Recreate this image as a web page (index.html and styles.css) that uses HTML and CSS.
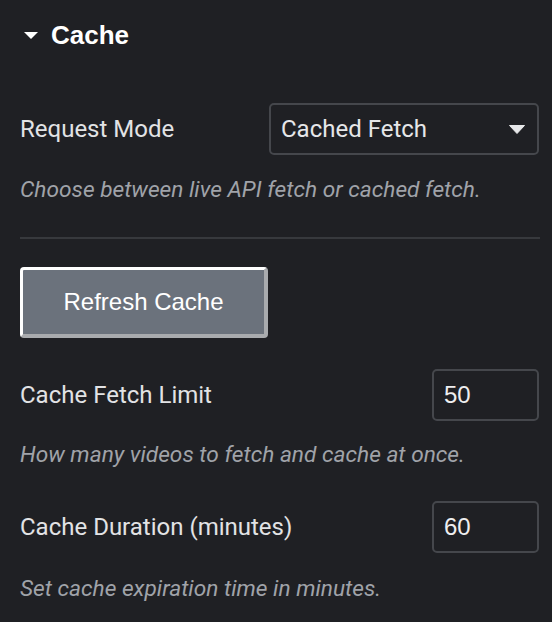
FILE: index.html
```html
<!DOCTYPE html>
<html lang="en">
<head>
<meta charset="utf-8">
<title>Cache</title>
<link rel="stylesheet" href="styles.css">
</head>
<body>
<div class="panel">
  <div class="section-title">
    <svg class="caret" width="14" height="7" viewBox="0 0 14 7"><path d="M0 0H14L7 7Z" fill="#ffffff"/></svg>
    <span>Cache</span>
  </div>

  <div class="row row-first">
    <span class="label">Request Mode</span>
    <div class="select">
      <span>Cached Fetch</span>
      <svg class="select-arrow" width="16" height="9" viewBox="0 0 16 9"><path d="M0.5 0.5H15.5L8 8.5Z" fill="#e6e7e9" stroke="#e6e7e9" stroke-linejoin="round"/></svg>
    </div>
  </div>
  <p class="help help-1">Choose between live API fetch or cached fetch.</p>

  <div class="divider"></div>

  <button class="refresh" type="button">Refresh Cache</button>

  <div class="row row-limit">
    <span class="label">Cache Fetch Limit</span>
    <input class="num" type="text" value="50">
  </div>
  <p class="help help-2">How many videos to fetch and cache at once.</p>

  <div class="row row-duration">
    <span class="label">Cache Duration (minutes)</span>
    <input class="num" type="text" value="60">
  </div>
  <p class="help help-3">Set cache expiration time in minutes.</p>
</div>
</body>
</html>
```

FILE: styles.css
```css
html, body {
  margin: 0;
  padding: 0;
  background: #1f2024;
}

.panel {
  padding: 20px 12px 0 20px;
  display: flex;
  flex-direction: column;
  font-family: Roboto, "Liberation Sans", sans-serif;
}

.section-title {
  display: flex;
  align-items: center;
  height: 30px;
  font-family: "Liberation Sans", Arial, sans-serif;
  font-weight: 700;
  font-size: 26px;
  line-height: 30px;
  color: #ffffff;
}

.caret {
  margin-left: 4px;
  margin-right: 13px;
  margin-top: 1px;
}

.row {
  display: flex;
  align-items: center;
  justify-content: space-between;
}

.row-first {
  margin-top: 53px;
}

.label {
  font-size: 24px;
  line-height: 30px;
  color: #e2e3e5;
}

.select {
  box-sizing: border-box;
  width: 270px;
  height: 52px;
  margin-right: 1px;
  border: 2px solid #45474c;
  border-radius: 5px;
  display: flex;
  align-items: center;
  justify-content: space-between;
  padding: 0 12px 0 10px;
  font-size: 24px;
  color: #e6e7e9;
}

.help {
  margin: 0;
  font-size: 22.7px;
  line-height: 30px;
  font-style: italic;
  color: #a0a3a9;
}

.help-1 { margin-top: 20px; }
.help-2 { margin-top: 19px; }
.help-3 { margin-top: 21px; }

.divider {
  height: 2px;
  background: #37393d;
  margin-top: 32px;
}

.refresh {
  box-sizing: border-box;
  width: 248px;
  height: 71px;
  margin-top: 28px;
  padding: 0;
  background: #6b727c;
  border-style: solid;
  border-width: 3px 4px 4px 3px;
  border-color: #ffffff #a9abae #a9abae #ffffff;
  border-radius: 4px;
  font-family: "Liberation Sans", Arial, sans-serif;
  font-size: 24px;
  color: #ffffff;
  text-align: center;
}

.row-limit { margin-top: 31px; }
.row-duration { margin-top: 31px; }

.num {
  box-sizing: border-box;
  width: 107px;
  height: 52px;
  margin: 0 1px 0 0;
  padding: 0 0 0 10px;
  background: transparent;
  border: 2px solid #45474c;
  border-radius: 5px;
  font-family: "Liberation Sans", Arial, sans-serif;
  font-size: 24px;
  color: #eeeeef;
  outline: none;
}
```
